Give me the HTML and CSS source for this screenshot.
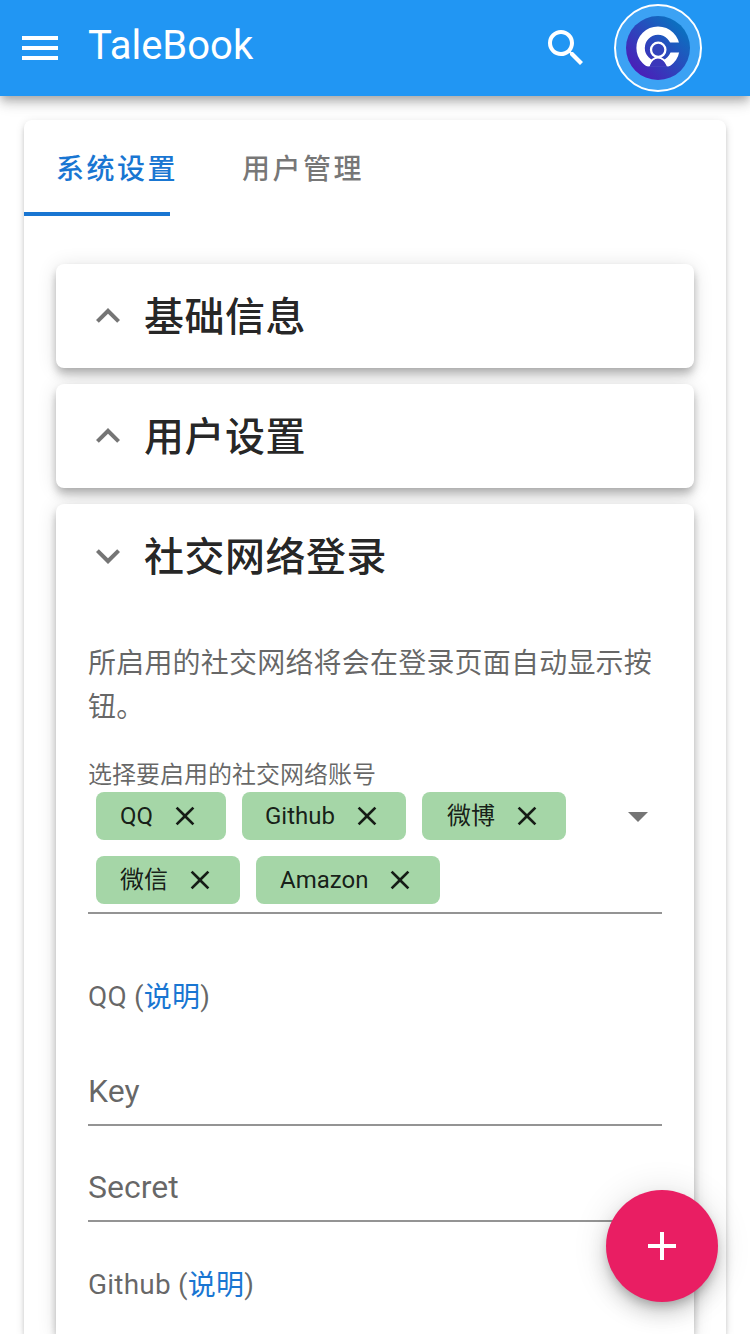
FILE: index.html
```html
<!DOCTYPE html>
<html lang="zh-CN">
<head>
<meta charset="utf-8">
<title>TaleBook</title>
<link rel="stylesheet" href="styles.css">
</head>
<body>
<header class="app-bar">
  <svg class="icon" viewBox="0 0 24 24"><path d="M3,6H21V8H3V6M3,11H21V13H3V11M3,16H21V18H3V16Z"/></svg>
  <div class="app-title">TaleBook</div>
  <svg class="icon search" viewBox="0 0 24 24"><path d="M9.5,3A6.5,6.5 0 0,1 16,9.5C16,11.11 15.41,12.59 14.44,13.73L14.71,14H15.5L20.5,19L19,20.5L14,15.5V14.71L13.73,14.44C12.59,15.41 11.11,16 9.5,16A6.5,6.5 0 0,1 3,9.5A6.5,6.5 0 0,1 9.5,3M9.5,5C7,5 5,7 5,9.5C5,12 7,14 9.5,14C12,14 14,12 14,9.5C14,7 12,5 9.5,5Z"/></svg>
  <div class="avatar-button">
    <svg class="avatar" viewBox="0 0 64 64">
      <defs>
        <linearGradient id="disc" x1="0.15" y1="0.85" x2="0.85" y2="0.15"><stop offset="0" stop-color="#4a1fb8"/><stop offset="1" stop-color="#0b70c0"/></linearGradient>
        <clipPath id="mark"><path d="M0 0H64V26.500H40V36.500H64V50.300H0Z"/></clipPath>
        <clipPath id="base"><path d="M0 0H64V50.300H0Z"/></clipPath>
      </defs>
      <circle cx="32" cy="32" r="32" fill="url(#disc)"/>
      <circle cx="32" cy="32" r="17.400" fill="none" stroke="#fff" stroke-width="8.400" clip-path="url(#mark)"/>
      <path d="M22 52C24.500 45 27.500 41.600 32 41.600S39.500 45 42.500 52Z" fill="#3b37ba" stroke="#fff" stroke-width="2" clip-path="url(#base)"/>
      <path d="M23.500 50.800Q26 43 32 43T41 50.800Z" fill="#3b37ba"/>
      <circle cx="32.200" cy="33.800" r="7.200" fill="#3344bb" stroke="#fff" stroke-width="2.300"/>
    </svg>
  </div>
</header>
<main class="page">
  <nav class="tabs">
    <div class="tab active">系统设置</div>
    <div class="tab">用户管理</div>
  </nav>
  <div class="panels">
    <section class="panel">
      <h2 class="panel-title"><svg class="icon" viewBox="0 0 24 24"><path d="M7.41,15.41L12,10.83L16.59,15.41L18,14L12,8L6,14L7.41,15.41Z"/></svg><span>基础信息</span></h2>
    </section>
    <section class="panel">
      <h2 class="panel-title"><svg class="icon" viewBox="0 0 24 24"><path d="M7.41,15.41L12,10.83L16.59,15.41L18,14L12,8L6,14L7.41,15.41Z"/></svg><span>用户设置</span></h2>
    </section>
    <section class="panel open">
      <h2 class="panel-title"><svg class="icon" viewBox="0 0 24 24"><path d="M7.41,8.58L12,13.17L16.59,8.58L18,10L12,16L6,10L7.41,8.58Z"/></svg><span>社交网络登录</span></h2>
      <div class="panel-body">
        <p class="note">所启用的社交网络将会在登录页面自动显示按钮。</p>
        <div class="select-label">选择要启用的社交网络账号</div>
        <div class="select">
          <div class="chips">
            <span class="chip chip-qq">QQ<svg viewBox="0 0 24 24"><path d="M19,6.41L17.59,5L12,10.59L6.41,5L5,6.41L10.59,12L5,17.59L6.41,19L12,13.41L17.59,19L19,17.59L13.41,12L19,6.41Z"/></svg></span>
            <span class="chip chip-github">Github<svg viewBox="0 0 24 24"><path d="M19,6.41L17.59,5L12,10.59L6.41,5L5,6.41L10.59,12L5,17.59L6.41,19L12,13.41L17.59,19L19,17.59L13.41,12L19,6.41Z"/></svg></span>
            <span class="chip chip-weibo">微博<svg viewBox="0 0 24 24"><path d="M19,6.41L17.59,5L12,10.59L6.41,5L5,6.41L10.59,12L5,17.59L6.41,19L12,13.41L17.59,19L19,17.59L13.41,12L19,6.41Z"/></svg></span>
            <span class="chip">微信<svg viewBox="0 0 24 24"><path d="M19,6.41L17.59,5L12,10.59L6.41,5L5,6.41L10.59,12L5,17.59L6.41,19L12,13.41L17.59,19L19,17.59L13.41,12L19,6.41Z"/></svg></span>
            <span class="chip">Amazon<svg viewBox="0 0 24 24"><path d="M19,6.41L17.59,5L12,10.59L6.41,5L5,6.41L10.59,12L5,17.59L6.41,19L12,13.41L17.59,19L19,17.59L13.41,12L19,6.41Z"/></svg></span>
          </div>
          <svg class="icon" viewBox="0 0 24 24"><path d="M7,10L12,15L17,10H7Z"/></svg>
        </div>
        <p class="provider">QQ (<a class="link">说明</a>)</p>
        <div class="field">Key</div>
        <div class="field second">Secret</div>
        <p class="provider next">Github (<a class="link">说明</a>)</p>
      </div>
    </section>
  </div>
</main>
<div class="fab"><svg class="icon" viewBox="0 0 24 24"><path d="M19,13H13V19H11V13H5V11H11V5H13V11H19V13Z"/></svg></div>
</body>
</html>
```
FILE: styles.css
```css
* { box-sizing: border-box; }
body {
  margin: 0;
  height: 1334px;
  overflow: hidden;
  position: relative;
  background: #fff;
  font-family: Roboto, "Noto Sans CJK SC", sans-serif;
  color: rgba(0, 0, 0, .87);
}
svg { display: block; flex: none; fill: currentColor; }
.icon { width: 48px; height: 48px; }
.app-bar {
  height: 96px;
  padding: 0 48px 0 16px;
  display: flex;
  align-items: center;
  background: #2196f3;
  color: #fff;
  box-shadow: 0 4px 8px -2px rgba(0,0,0,.2), 0 8px 10px rgba(0,0,0,.14), 0 2px 20px rgba(0,0,0,.12);
}
.app-title { margin-left: 24px; padding-bottom: 4px; font-size: 40px; line-height: 60px; }
.search { margin-left: auto; margin-right: 24px; }
.avatar-button {
  width: 88px;
  height: 88px;
  padding: 10px;
  border: 2px solid #fff;
  border-radius: 50%;
  background: rgba(255, 255, 255, .12);
}
.avatar { width: 64px; height: 64px; }
.page {
  margin: 24px 24px 0;
  height: 1214px;
  border-radius: 8px 8px 0 0;
  background: #fff;
  box-shadow: 0 6px 2px -4px rgba(0,0,0,.2), 0 4px 4px rgba(0,0,0,.14), 0 2px 10px rgba(0,0,0,.12);
}
.tabs { display: flex; height: 96px; background: linear-gradient(#1976d2, #1976d2) 0 100% / 146px 4px no-repeat; }
.tab {
  padding: 2px 32px 0;
  font-size: 28px;
  font-weight: 500;
  line-height: 96px;
  height: 96px;
  letter-spacing: 2.5px;
  color: rgba(0, 0, 0, .54);
}
.tab.active { color: #1976d2; }
.panels { display: flex; flex-direction: column; gap: 16px; padding: 48px 32px 0; }
.panel {
  border-radius: 8px;
  background: #fff;
  box-shadow: 0 4px 8px -2px rgba(0,0,0,.2), 0 8px 10px rgba(0,0,0,.14), 0 2px 20px rgba(0,0,0,.12);
}
.panel.open { height: 830px; border-radius: 8px 8px 0 0; }
.panel-title {
  display: flex;
  align-items: center;
  gap: 12px;
  height: 104px;
  margin: 0;
  padding-left: 28px;
  font-size: 40px;
  font-weight: 500;
  letter-spacing: .5px;
}
.panel-title span { padding-bottom: 4px; }
.panel-title .icon { color: rgba(0, 0, 0, .54); }
.panel-body { padding: 34px 32px 0; color: rgba(0, 0, 0, .6); }
.note { margin: 0; font-size: 28px; line-height: 44px; letter-spacing: .2px; }
.select-label { margin-top: 29px; height: 33px; font-size: 24px; line-height: 32px; }
.select {
  display: flex;
  justify-content: space-between;
  height: 122px;
  border-bottom: 2px solid rgba(0, 0, 0, .42);
}
.select .icon { color: rgba(0, 0, 0, .54); }
.chips { display: flex; flex-wrap: wrap; align-content: flex-start; gap: 16px; width: 500px; padding-left: 8px; }
.chip {
  display: flex;
  align-items: center;
  gap: 16px;
  height: 48px;
  padding: 0 24px;
  border-radius: 8px;
  background: #a5d6a7;
  color: rgba(0, 0, 0, .87);
  font-size: 24px;
  line-height: 48px;
}
.chip svg { width: 32px; height: 32px; }
.chip-qq { width: 130px; }
.chip-github { width: 164px; padding: 0 23px; }
.chip-weibo { width: 144px; padding: 0 23px 0 25px; }
.provider { margin: 61px 0 0; font-size: 28px; line-height: 44px; letter-spacing: .2px; }
.link { position: relative; top: 1px; color: #1976d2; }
.field {
  height: 64px;
  margin-top: 43px;
  border-bottom: 2px solid rgba(0, 0, 0, .42);
  font-size: 32px;
  line-height: 58px;
}
.field.second { margin-top: 32px; }
.provider.next { margin-top: 41px; }
.fab {
  position: absolute;
  left: 606px;
  top: 1190px;
  width: 112px;
  height: 112px;
  padding: 32px;
  border-radius: 50%;
  background: #e91e63;
  color: #fff;
  box-shadow: 0 6px 10px -2px rgba(0,0,0,.2), 0 12px 20px rgba(0,0,0,.14), 0 2px 36px rgba(0,0,0,.12);
}
```
